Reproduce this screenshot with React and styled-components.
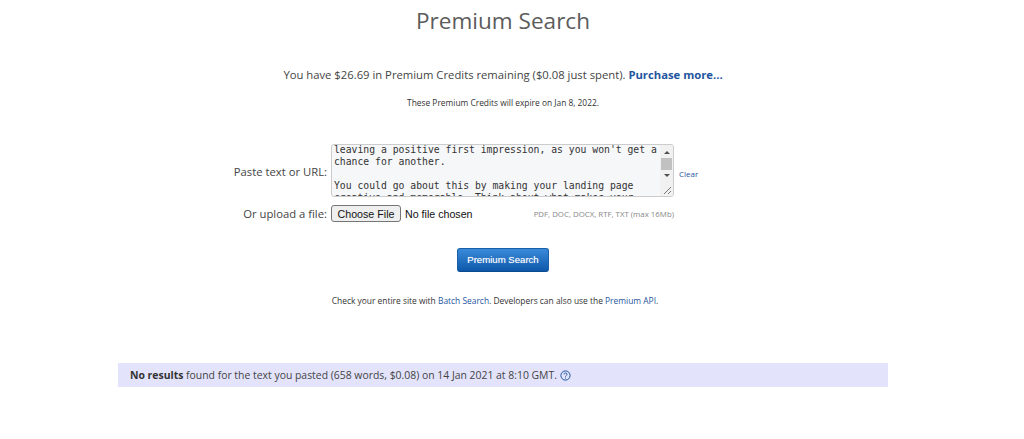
import React from 'react';
import styled, { createGlobalStyle } from 'styled-components';

const GlobalStyle = createGlobalStyle`
    html, body {
        margin: 0;
        padding: 0;
        background: #fff;
    }
    body {
        font-family: "Open Sans", sans-serif;
        color: #333;
    }
`;

const Page = styled.div`
    box-sizing: border-box;
    width: 1024px;
    height: 439px;
    padding-right: 18px;
    overflow: hidden;
    display: flex;
    flex-direction: column;
    align-items: center;
`;

const Title = styled.h1`
    margin: 7px 0 0;
    font-size: 22.55px;
    line-height: 28px;
    font-weight: 400;
    color: #5c5c5c;
`;

const Credits = styled.p`
    margin: 32px 0 0;
    font-size: 11.27px;
    line-height: 16px;
    color: #444;
`;

const Expiry = styled.p`
    margin: 14px 0 0;
    font-size: 8.4px;
    line-height: 12px;
    color: #333;
`;

const BoldLink = styled.a`
    font-weight: 700;
    color: #1f56a0;
`;

const Form = styled.div`
    margin-top: 35px;
    width: 544px;
    display: grid;
    grid-template-columns: 100px 343px 101px;
    row-gap: 8px;
    align-items: center;
`;

const Label = styled.label`
    justify-self: end;
    padding-right: 4px;
    padding-top: ${(p) => p.$nudge || 0}px;
    font-size: 11.27px;
    color: #444;
    white-space: nowrap;
`;

const TextBox = styled.div`
    box-sizing: border-box;
    height: 53px;
    border: 1px solid #ccc;
    border-radius: 3px;
    background: #f6f7f9;
    display: flex;
    overflow: hidden;
`;

const TextContent = styled.div`
    flex: 1;
    padding: 0 2px;
    margin-top: -1px;
    font-family: "DejaVu Sans Mono", monospace;
    font-size: 9.75px;
    line-height: 12px;
    color: #333;
    white-space: pre;
    overflow: hidden;
`;

const Scrollbar = styled.div`
    width: 13px;
    background: #f1f1f1;
    display: flex;
    flex-direction: column;
    align-items: center;
    position: relative;
`;

const Arrow = styled.span`
    width: 0;
    height: 0;
    margin-top: ${(p) => p.$top}px;
    border-left: 3px solid transparent;
    border-right: 3px solid transparent;
    ${(p) => (p.$down ? 'border-top: 3px solid #505050;' : 'border-bottom: 3px solid #505050;')}
`;

const Thumb = styled.span`
    width: 11px;
    height: 12px;
    margin-top: 4px;
    background: #c1c1c1;
`;

const Grip = styled.svg`
    position: absolute;
    right: 1px;
    bottom: 1px;
`;

const ClearLink = styled.a`
    padding-left: 5px;
    padding-top: 5px;
    font-size: 8px;
    color: #1f56a0;
`;

const FileRow = styled.div`
    grid-column: 2 / 3;
    display: flex;
    align-items: center;
    height: 17px;
`;

const FileButton = styled.button`
    box-sizing: border-box;
    width: 70px;
    height: 17px;
    padding: 0;
    border: 1px solid #767676;
    border-radius: 3px;
    background: #efefef;
    font-family: "Liberation Sans", sans-serif;
    font-size: 10.67px;
    color: #111;
`;

const FileName = styled.span`
    margin-left: 4px;
    font-family: "Liberation Sans", sans-serif;
    font-size: 10.67px;
    color: #111;
`;

const FileHint = styled.span`
    margin-left: auto;
    font-size: 7.85px;
    color: #888;
`;

const SearchButton = styled.button`
    box-sizing: border-box;
    margin-top: 26px;
    width: 92px;
    height: 24px;
    padding: 0 0 1px;
    border: 1px solid #1a5fa8;
    border-bottom-color: #0c4a8f;
    border-radius: 3px;
    background: linear-gradient(#3a8ada, #0d58aa);
    font-family: "Liberation Sans", sans-serif;
    font-size: 9.6px;
    color: #fff;
    text-shadow: 0 0 1px rgba(255, 255, 255, 0.5);
`;

const Hint = styled.p`
    margin: 23px 16px 0 0;
    font-size: 8.42px;
    line-height: 12px;
    color: #333;
`;

const Link = styled.a`
    color: #1f56a0;
`;

const ResultBar = styled.div`
    box-sizing: border-box;
    margin-top: 56px;
    width: 770px;
    height: 24px;
    padding: 0 12px;
    display: flex;
    align-items: center;
    gap: 3px;
    background: #e3e3fb;
    font-size: 10.42px;
    color: #444;
    white-space: pre;
`;

const Strong = styled.b`
    color: #333;
`;

function HelpIcon() {
    return (
        <svg width="11" height="11" viewBox="0 0 11 11" fill="none" stroke="#1f56a0">
            <circle cx="5.5" cy="5.5" r="4.6" />
            <path d="M4 4.4c0-2 3-2 3 0 0 1-1.5 1-1.5 2.2" />
            <path d="M5.5 7.6v.9" />
        </svg>
    );
}

export default function App() {
    return (
        <>
            <GlobalStyle />
            <Page>
                <Title>Premium Search</Title>
                <Credits>
                    You have $26.69 in Premium Credits remaining ($0.08 just spent). <BoldLink>Purchase more...</BoldLink>
                </Credits>
                <Expiry>These Premium Credits will expire on Jan 8, 2022.</Expiry>

                <Form>
                    <Label $nudge={2}>Paste text or URL:</Label>
                    <TextBox>
                        <TextContent>{`leaving a positive first impression, as you won't get a
chance for another.

You could go about this by making your landing page
creative and memorable. Think about what makes your`}</TextContent>
                        <Scrollbar>
                            <Arrow $top={6} />
                            <Thumb />
                            <Arrow $down $top={4} />
                            <Grip width="9" height="9" viewBox="0 0 9 9" stroke="#777">
                                <path d="M1 8l7-7M5 8l3-3" />
                            </Grip>
                        </Scrollbar>
                    </TextBox>
                    <ClearLink>Clear</ClearLink>
                    <Label>Or upload a file:</Label>
                    <FileRow>
                        <FileButton>Choose File</FileButton>
                        <FileName>No file chosen</FileName>
                        <FileHint>PDF, DOC, DOCX, RTF, TXT (max 16Mb)</FileHint>
                    </FileRow>
                </Form>

                <SearchButton>Premium Search</SearchButton>
                <Hint>
                    Check your entire site with <Link>Batch Search</Link>. Developers can also use the <Link>Premium API</Link>.
                </Hint>
                <ResultBar>
                    <span><Strong>No results</Strong> found for the text you pasted (658 words, $0.08) on 14 Jan 2021 at 8:10 GMT.</span>
                    <HelpIcon />
                </ResultBar>
            </Page>
        </>
    );
}
